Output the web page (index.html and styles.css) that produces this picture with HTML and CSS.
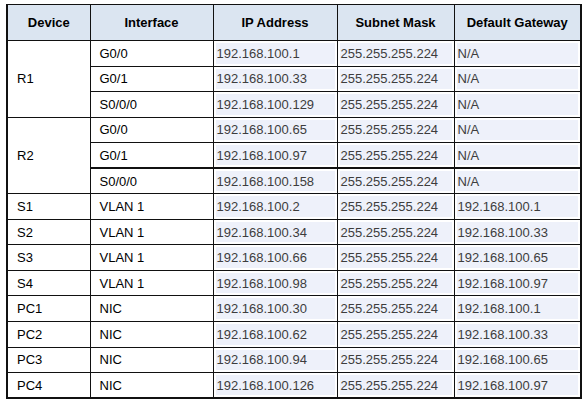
FILE: index.html
```html
<!DOCTYPE html>
<html>
<head>
<meta charset="utf-8">
<link rel="stylesheet" href="styles.css">
</head>
<body>
<table class="addr">
  <colgroup>
    <col class="c-dev"><col class="c-if"><col class="c-ip"><col class="c-mask"><col class="c-gw">
  </colgroup>
  <thead>
    <tr class="head">
      <th>Device</th><th>Interface</th><th>IP Address</th><th>Subnet Mask</th><th>Default Gateway</th>
    </tr>
  </thead>
  <tbody>
    <tr>
      <td class="dev" rowspan="3">R1</td><td class="if">G0/0</td>
      <td class="val">192.168.100.1</td><td class="val">255.255.255.224</td><td class="val">N/A</td>
    </tr>
    <tr>
      <td class="if">G0/1</td>
      <td class="val">192.168.100.33</td><td class="val">255.255.255.224</td><td class="val">N/A</td>
    </tr>
    <tr>
      <td class="if">S0/0/0</td>
      <td class="val">192.168.100.129</td><td class="val">255.255.255.224</td><td class="val">N/A</td>
    </tr>
    <tr>
      <td class="dev" rowspan="3">R2</td><td class="if">G0/0</td>
      <td class="val">192.168.100.65</td><td class="val">255.255.255.224</td><td class="val">N/A</td>
    </tr>
    <tr>
      <td class="if">G0/1</td>
      <td class="val">192.168.100.97</td><td class="val">255.255.255.224</td><td class="val">N/A</td>
    </tr>
    <tr class="thick">
      <td class="if">S0/0/0</td>
      <td class="val">192.168.100.158</td><td class="val">255.255.255.224</td><td class="val">N/A</td>
    </tr>
    <tr>
      <td class="dev">S1</td><td class="if">VLAN 1</td>
      <td class="val">192.168.100.2</td><td class="val">255.255.255.224</td><td class="val">192.168.100.1</td>
    </tr>
    <tr>
      <td class="dev">S2</td><td class="if">VLAN 1</td>
      <td class="val">192.168.100.34</td><td class="val">255.255.255.224</td><td class="val">192.168.100.33</td>
    </tr>
    <tr>
      <td class="dev">S3</td><td class="if">VLAN 1</td>
      <td class="val">192.168.100.66</td><td class="val">255.255.255.224</td><td class="val">192.168.100.65</td>
    </tr>
    <tr>
      <td class="dev">S4</td><td class="if">VLAN 1</td>
      <td class="val">192.168.100.98</td><td class="val">255.255.255.224</td><td class="val">192.168.100.97</td>
    </tr>
    <tr>
      <td class="dev">PC1</td><td class="if">NIC</td>
      <td class="val">192.168.100.30</td><td class="val">255.255.255.224</td><td class="val">192.168.100.1</td>
    </tr>
    <tr>
      <td class="dev">PC2</td><td class="if">NIC</td>
      <td class="val">192.168.100.62</td><td class="val">255.255.255.224</td><td class="val">192.168.100.33</td>
    </tr>
    <tr>
      <td class="dev">PC3</td><td class="if">NIC</td>
      <td class="val">192.168.100.94</td><td class="val">255.255.255.224</td><td class="val">192.168.100.65</td>
    </tr>
    <tr>
      <td class="dev">PC4</td><td class="if">NIC</td>
      <td class="val">192.168.100.126</td><td class="val">255.255.255.224</td><td class="val">192.168.100.97</td>
    </tr>
  </tbody>
</table>
</body>
</html>
```
FILE: styles.css
```css
html, body {
  margin: 0;
  padding: 0;
  background: #ffffff;
}
body {
  padding: 4px 0 0 6px;
  font-family: "Liberation Sans", Arial, sans-serif;
  font-size: 13px;
}
.addr {
  border-collapse: collapse;
  table-layout: fixed;
  width: 576px;
  border-top: 1px solid #111;
  border-left: 2px solid #111;
  border-right: 2px solid #111;
  border-bottom: 2px solid #111;
}
.c-dev { width: 83px; }
.c-if { width: 123px; }
.c-ip { width: 124px; }
.c-mask { width: 117px; }
.c-gw { width: 127px; }

.addr th, .addr td {
  border: 1px solid #111;
  padding: 0;
  line-height: 15px;
}
.head th {
  height: 35px;
  background: #dbe5f1;
  font-weight: bold;
  text-align: center;
  color: #000;
}
.addr tbody tr {
  height: 25.55px;
}
.dev {
  padding-left: 9px !important;
  color: #000;
}
.if {
  padding-left: 9px !important;
  color: #000;
}
.val {
  padding-left: 3px !important;
  color: #3d3d3d;
  background: #eef1fa;
  box-shadow: inset 0 0 0 2px #ffffff;
}
.addr tr.thick td {
  border-top: 2px solid #111;
}
```
